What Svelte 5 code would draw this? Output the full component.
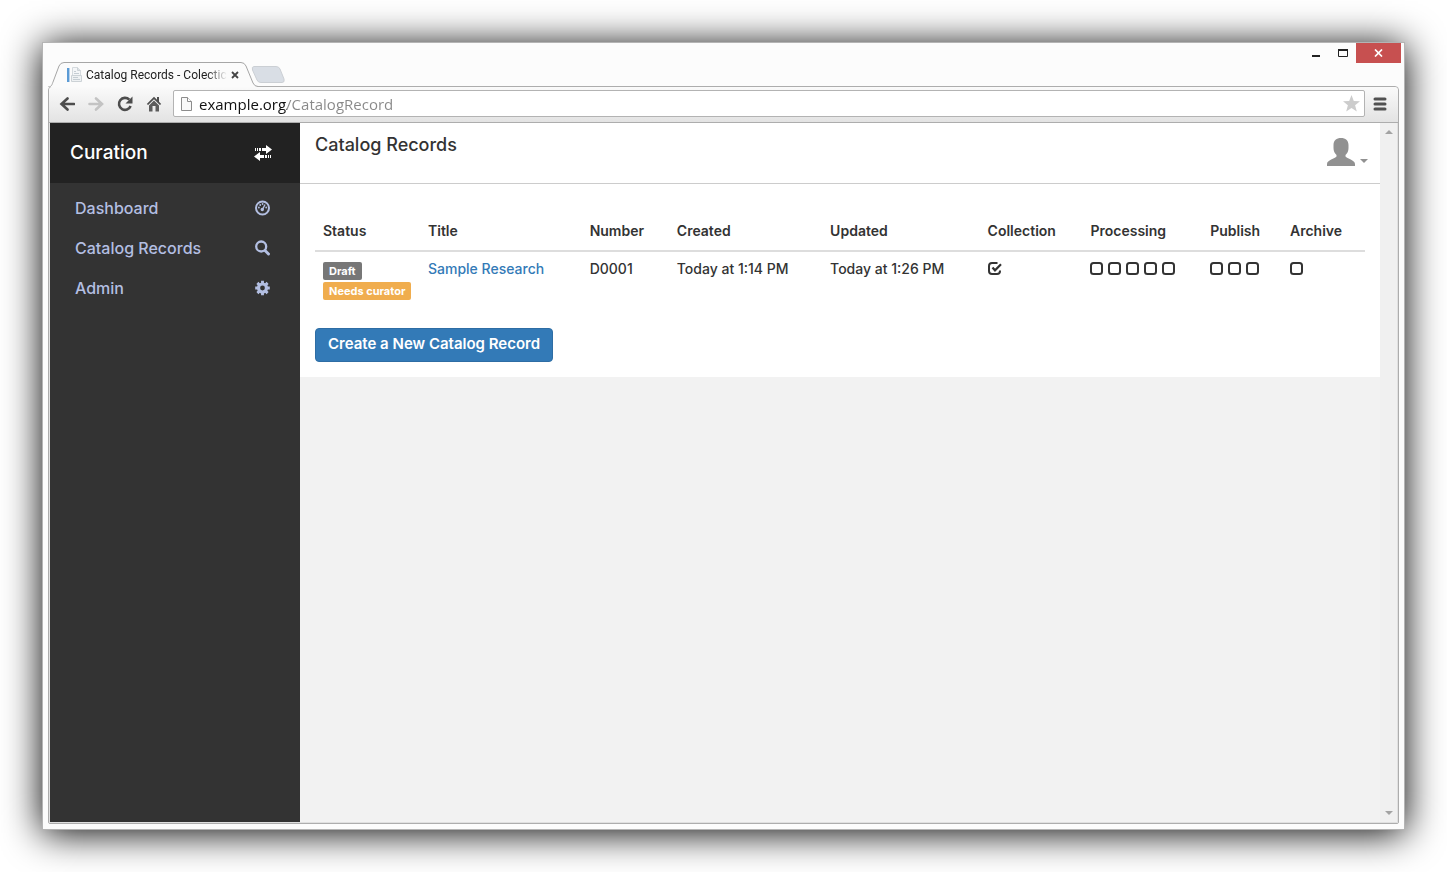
<script>
  const columns = [
    { name: 'Status', width: 10 },
    { name: 'Title', width: 15.4 },
    { name: 'Number', width: 8.3 },
    { name: 'Created', width: 14.6 },
    { name: 'Updated', width: 15 },
    { name: 'Collection', width: 9.8 },
    { name: 'Processing', width: 11.4 },
    { name: 'Publish', width: 7.6 },
    { name: 'Archive', width: 7.9 }
  ];
  const steps = [
    { name: 'Collection', done: [true] },
    { name: 'Processing', done: [false, false, false, false, false] },
    { name: 'Publish', done: [false, false, false] },
    { name: 'Archive', done: [false] }
  ];
  const nav = [
    { label: 'Dashboard', icon: 'dashboard' },
    { label: 'Catalog Records', icon: 'search' },
    { label: 'Admin', icon: 'cog' }
  ];
</script>

<div class="desktop">
  <div class="window">
    <div class="controls">
      <button aria-label="Minimize"><svg width="10" height="10"><path d="M1 7h8v2H1z" fill="#222" /></svg></button>
      <button aria-label="Maximize"><svg width="12" height="10"><path d="M1.500 1.500h9v7h-9z" fill="none" stroke="#222" /><path d="M1 1h10v2H1z" fill="#222" /></svg></button>
      <button class="close" aria-label="Close"><svg width="9" height="8"><path d="M1 .5l7 7M8 .5l-7 7" stroke="#fff" stroke-width="1.7" /></svg></button>
    </div>

    <div class="tabs">
      <div class="tab">
        <svg class="shape" width="212" height="25" viewBox="0 0 212 25">
          <path d="M0 25C4 25 4 22 5 20L11 4Q12.500 .5 16 .5H193Q196.500 .5 198 4L205 21Q206.500 24.500 210 24.500V25Z" fill="#fbfbfb" />
          <path d="M0 25C4 25 4 22 5 20L11 4Q12.500 .5 16 .5H193Q196.500 .5 198 4L205 21Q206.500 24.500 210 24.500" fill="none" stroke="#a6a6a6" />
        </svg>
        <svg class="favicon" width="16" height="16" viewBox="0 0 16 16">
          <path d="M1 1h2v14H1z" fill="#5b9bd5" /><path d="M3 1h1v14H3z" fill="#b7d2ec" />
          <path d="M6.500 .5h5l3 3v7h-8z" fill="#f4f6f8" stroke="#d5dade" />
          <path d="M11.500 .5v3h3" fill="#dde2e6" stroke="#ccd2d6" />
          <path d="M5.500 8.500h10v6h-10z" fill="#eef1f3" stroke="#ccd2d6" />
          <path d="M8 4.500h2M8 6.500h5M7 10.500h5M7 12.500h7" stroke="#c5cdd3" />
        </svg>
        <span class="tab-title">Catalog Records - Colectic</span>
        <button class="tab-close" aria-label="Close tab"><svg width="8" height="8"><path d="M1 1l6 6M7 1L1 7" stroke="#444" stroke-width="1.8" /></svg></button>
      </div>
      <button class="new-tab" aria-label="New tab"><svg width="34" height="17" viewBox="0 0 34 17"><path d="M3 .5H25Q28 .5 29 3L33 13Q34 16.500 31 16.500H10Q7 16.500 6 14L1.500 4Q.5 .5 3 .5Z" fill="#d9dee5" stroke="#cbcfd4" /></svg></button>
    </div>

    <div class="frame">
      <div class="toolbar">
        <button aria-label="Back"><svg width="16" height="16" viewBox="0 0 16 16"><path d="M15 8H3M8.500 2.500L2.500 8l6 5.500" fill="none" stroke="#4d4d4d" stroke-width="2.600" stroke-linecap="round" /></svg></button>
        <button aria-label="Forward"><svg width="16" height="16" viewBox="0 0 16 16"><path d="M1.500 8H13M8 2.500l6 5.500-6 5.500" fill="none" stroke="#c3c3c3" stroke-width="2.600" stroke-linecap="round" /></svg></button>
        <button aria-label="Reload"><svg width="16" height="16" viewBox="0 0 16 16"><path d="M12.300 3.700A6 6 0 1 0 13.600 10" fill="none" stroke="#4d4d4d" stroke-width="2.600" /><path d="M15.500 .5v7h-7z" fill="#4d4d4d" /></svg></button>
        <button aria-label="Home"><svg width="16" height="16" viewBox="0 0 16 16"><path d="M8 .8L.8 8l1.300 1L8 3.200 13.900 9l1.300-1L13 5.800V1h-2v2.800z" fill="#4d4d4d" /><path d="M8 4.500L3 9.400V15.500h3.500V10h3v5.500H13V9.400z" fill="#5c5c5c" /></svg></button>
        <div class="omnibox">
          <svg width="13" height="16" viewBox="0 0 13 16"><path d="M1.500 1.500h6l4 4v9h-10z" fill="#f8f8f8" stroke="#8c8c8c" /><path d="M7.500 1.500v4h4" fill="#fff" stroke="#8c8c8c" /></svg>
          <input class="url" type="text" aria-label="Address" value="example.org/CatalogRecord" />
          <button aria-label="Bookmark"><svg width="17" height="17" viewBox="0 0 17 17"><path d="M8.500 0l2.300 5.900 6.200.3-4.900 4 1.700 6.300-5.300-3.500-5.300 3.500 1.700-6.300L0 6.200l6.200-.3z" fill="#ccc" /></svg></button>
        </div>
        <button class="menu" aria-label="Menu"><svg width="14" height="14" viewBox="0 0 14 14"><path d="M2 2h10M2 7h10M2 12h10" stroke="#515151" stroke-width="3" stroke-linecap="round" /></svg></button>
      </div>

      <div class="page">
        <aside>
          <div class="brand">
            <span>Curation</span>
            <button aria-label="Toggle sidebar"><svg width="18" height="16" viewBox="0 0 18 16" fill="#fff"><path d="M1 3h1v3H1zM3 3h1v3H3zM5 3h2v3H5zM8 3h4V0l6 4.500L12 9V6H8z" /><path d="M17 10h-1v3h1zM15 10h-1v3h1zM13 10h-2v3h2zM10 10H6V7L0 11.500 6 16v-3h4z" /></svg></button>
          </div>
          <nav>
            {#each nav as item}
              <a href="#{item.icon}">
                <span>{item.label}</span>
                <svg width="15" height="16" viewBox="0 0 15 16" fill="#b3bfe2" stroke="#b3bfe2">
                  {#if item.icon === 'dashboard'}
                    <circle cx="7.500" cy="8" r="6.500" fill="none" stroke-width="2" />
                    <path d="M7.500 9.500L10 4.500" stroke-width="1.400" />
                    <g stroke="none"><circle cx="7.300" cy="9.500" r="1.700" /><circle cx="3.900" cy="7.500" r=".9" /><circle cx="5.200" cy="5" r=".9" /><circle cx="7.600" cy="4" r=".9" /><circle cx="11.200" cy="7.500" r=".9" /></g>
                  {:else if item.icon === 'search'}
                    <circle cx="6.200" cy="6.500" r="5" fill="none" stroke-width="2.300" />
                    <path d="M10 10.500l3.500 3.500" stroke-width="2.900" stroke-linecap="round" />
                  {:else}
                    <circle cx="7.500" cy="8" r="4" fill="none" stroke-width="3.200" />
                    <path d="M7.500 .7v2.600M7.500 12.700v2.600M.2 8h2.600M12.200 8h2.600M2.400 2.900l1.800 1.800M10.800 11.300l1.800 1.800M12.600 2.900l-1.800 1.800M4.200 11.300l-1.800 1.800" stroke-width="2.900" />
                  {/if}
                </svg>
              </a>
            {/each}
          </nav>
        </aside>

        <div class="body">
          <main>
            <header>
              <h1>Catalog Records</h1>
              <button class="user" aria-label="Account">
                <svg width="30" height="30" viewBox="0 0 30 30"><path d="M15 1C19.500 1 22.500 3.500 22.500 8V11C22.500 14 21.500 16 19.500 18V19.500C21 21.500 29 23 29 27V29H1V27C1 23 9 21.500 10.500 19.500V18C8.500 16 7.500 14 7.500 11V8C7.500 3.500 10.500 1 15 1Z" fill="#919191" /></svg>
                <svg class="caret" width="8" height="4"><path d="M0 0h8L4 4z" fill="#919191" /></svg>
              </button>
            </header>
            <section>
              <table>
                <colgroup>
                  {#each columns as c}<col style="width: {c.width}%" />{/each}
                </colgroup>
                <thead>
                  <tr>{#each columns as c}<th scope="col">{c.name}</th>{/each}</tr>
                </thead>
                <tbody>
                  <tr>
                    <td><div class="badges"><span class="badge">Draft</span><span class="badge warn">Needs curator</span></div></td>
                    <td><a href="#record">Sample Research</a></td>
                    <td>D0001</td>
                    <td>Today at 1:14 PM</td>
                    <td>Today at 1:26 PM</td>
                    {#each steps as step}
                      <td>
                        <div class="checks">
                          {#each step.done as done, i}
                            <label>
                              <input type="checkbox" checked={done} aria-label="{step.name} step {i + 1}" />
                              <svg width="14" height="14" viewBox="0 0 14 14" fill="none" stroke="#333" stroke-width="2">
                                {#if done}
                                  <path d="M9.500 1H4Q1 1 1 4V9Q1 12 4 12H9Q12 12 12 9V8.500" />
                                  <path d="M4.500 5.500L7 8.300L13 2.300" stroke-width="2.200" />
                                {:else}
                                  <rect x="1" y="1" width="11" height="11" rx="2.500" />
                                {/if}
                              </svg>
                            </label>
                          {/each}
                        </div>
                      </td>
                    {/each}
                  </tr>
                </tbody>
              </table>
              <button class="create">Create a New Catalog Record</button>
            </section>
          </main>
        </div>

        <div class="scrollbar">
          <svg width="8" height="4"><path d="M0 4h8L4 0z" fill="#a3a3a3" /></svg>
          <svg width="8" height="4"><path d="M0 0h8L4 4z" fill="#a3a3a3" /></svg>
        </div>
      </div>
    </div>
  </div>
</div>

<style>
  :global(body) { background: #fff; }
  * { box-sizing: border-box; }
  svg { display: block; flex: none; }
  button { border: 0; padding: 0; background: none; font: inherit; color: inherit; display: flex; align-items: center; justify-content: center; }
  a { text-decoration: none; }

  .desktop { min-height: 100vh; display: flex; padding: 42px; font-family: Inter, sans-serif; font-size: 14px; line-height: 20px; color: #333; }
  .window { flex: 1; min-width: 0; display: flex; flex-direction: column; background: #fcfcfc; border: 1px solid #b4b4b4; padding: 0 5px 5px; box-shadow: 0 3px 36px #000; }

  .controls { height: 20px; display: flex; justify-content: flex-end; align-items: stretch; margin-right: -2px; }
  .controls button { width: 27px; }
  .controls .close { width: 45px; background: #c75050; }

  .tabs { position: relative; z-index: 1; height: 25px; margin: -1px 0; display: flex; font-family: Roboto, sans-serif; }
  .tab { position: relative; width: 203px; display: flex; align-items: center; padding: 0 8px 0 18px; }
  .shape { position: absolute; left: 0; top: 0; }
  .favicon { position: relative; }
  .tab-title { position: relative; flex: 1; margin-left: 4px; font-size: 12px; color: #222; white-space: nowrap; mask-image: linear-gradient(to left, transparent, #000 20px); }
  .tab-close { position: relative; width: 16px; height: 16px; }
  .new-tab { align-self: flex-start; margin-top: 4px; }

  .frame { flex: 1; display: flex; flex-direction: column; border: 1px solid #adadad; border-radius: 4px 4px 2px 2px; }
  .toolbar { height: 36px; display: flex; align-items: center; gap: 13px; padding: 0 10px 2px; background: linear-gradient(#fafafa, #e3e3e3); border-bottom: 1px solid #adadad; border-radius: 4px 4px 0 0; }
  .toolbar > button { width: 16px; height: 24px; }
  .omnibox { flex: 1; height: 27px; margin: 0 -6px 0 -2px; display: flex; align-items: center; gap: 6px; padding: 0 4px 0 6px; background: #fff; border: 1px solid #b3b3b3; border-radius: 2px; }
  .url { flex: 1; min-width: 0; border: 0; padding: 0; outline: 0; font: 15px/22px "Open Sans", sans-serif; color: transparent; background: linear-gradient(to right, #111 88px, #888 88px); background-clip: text; -webkit-background-clip: text; }

  .page { flex: 1; display: flex; padding: 0 1px 1px; background: #e0e0e0; }
  aside { width: 250px; flex: none; background: #333; }
  .brand { height: 60px; display: flex; align-items: center; justify-content: space-between; padding: 0 28px 0 20px; background: #222; color: #fff; font-size: 19px; font-weight: 500; }
  nav { display: flex; flex-direction: column; padding: 5px 30px 0 25px; }
  nav a { height: 40px; display: flex; align-items: center; justify-content: space-between; color: #b3bfe2; font-size: 16px; font-weight: 500; }

  .body { flex: 1; min-width: 0; background: #f2f2f2; }
  main { background: #fff; }
  header { height: 61px; display: flex; justify-content: space-between; align-items: flex-start; padding: 12px 12px 0 15px; border-bottom: 1px solid #ccc; }
  h1 { margin: 0; font-size: 18px; line-height: 20px; font-weight: 500; }
  .user { gap: 4px; margin-top: 2px; }
  .caret { margin-top: 18px; }
  section { padding: 30px 15px 15px; }
  table { width: 100%; table-layout: fixed; border-collapse: collapse; margin-bottom: 20px; }
  th, td { padding: 7px 8px 8px; text-align: left; vertical-align: top; white-space: nowrap; }
  th { padding-bottom: 9px; font-weight: 600; border-bottom: 2px solid #ddd; }
  td { font-weight: 500; }
  td a { color: #337ab7; }
  .badges { display: flex; flex-direction: column; align-items: flex-start; gap: 2px; padding-top: 3px; }
  .badge { padding: 0 6px; background: #777; color: #fff; border-radius: 2px; font-size: 11px; line-height: 18px; font-weight: 700; }
  .warn { background: #f0ad4e; }
  .checks { display: flex; gap: 4px; padding-top: 3px; }
  .checks label { position: relative; }
  .checks input { position: absolute; inset: 0; margin: 0; opacity: 0; }
  .create { height: 34px; padding: 0 12px 2px; background: #337ab7; border: 1px solid #2e6da4; border-radius: 4px; color: #fff; font-size: 15px; font-weight: 600; }

  .scrollbar { width: 17px; flex: none; display: flex; flex-direction: column; justify-content: space-between; align-items: center; padding: 7px 0; background: #f0f0f0; }
</style>
